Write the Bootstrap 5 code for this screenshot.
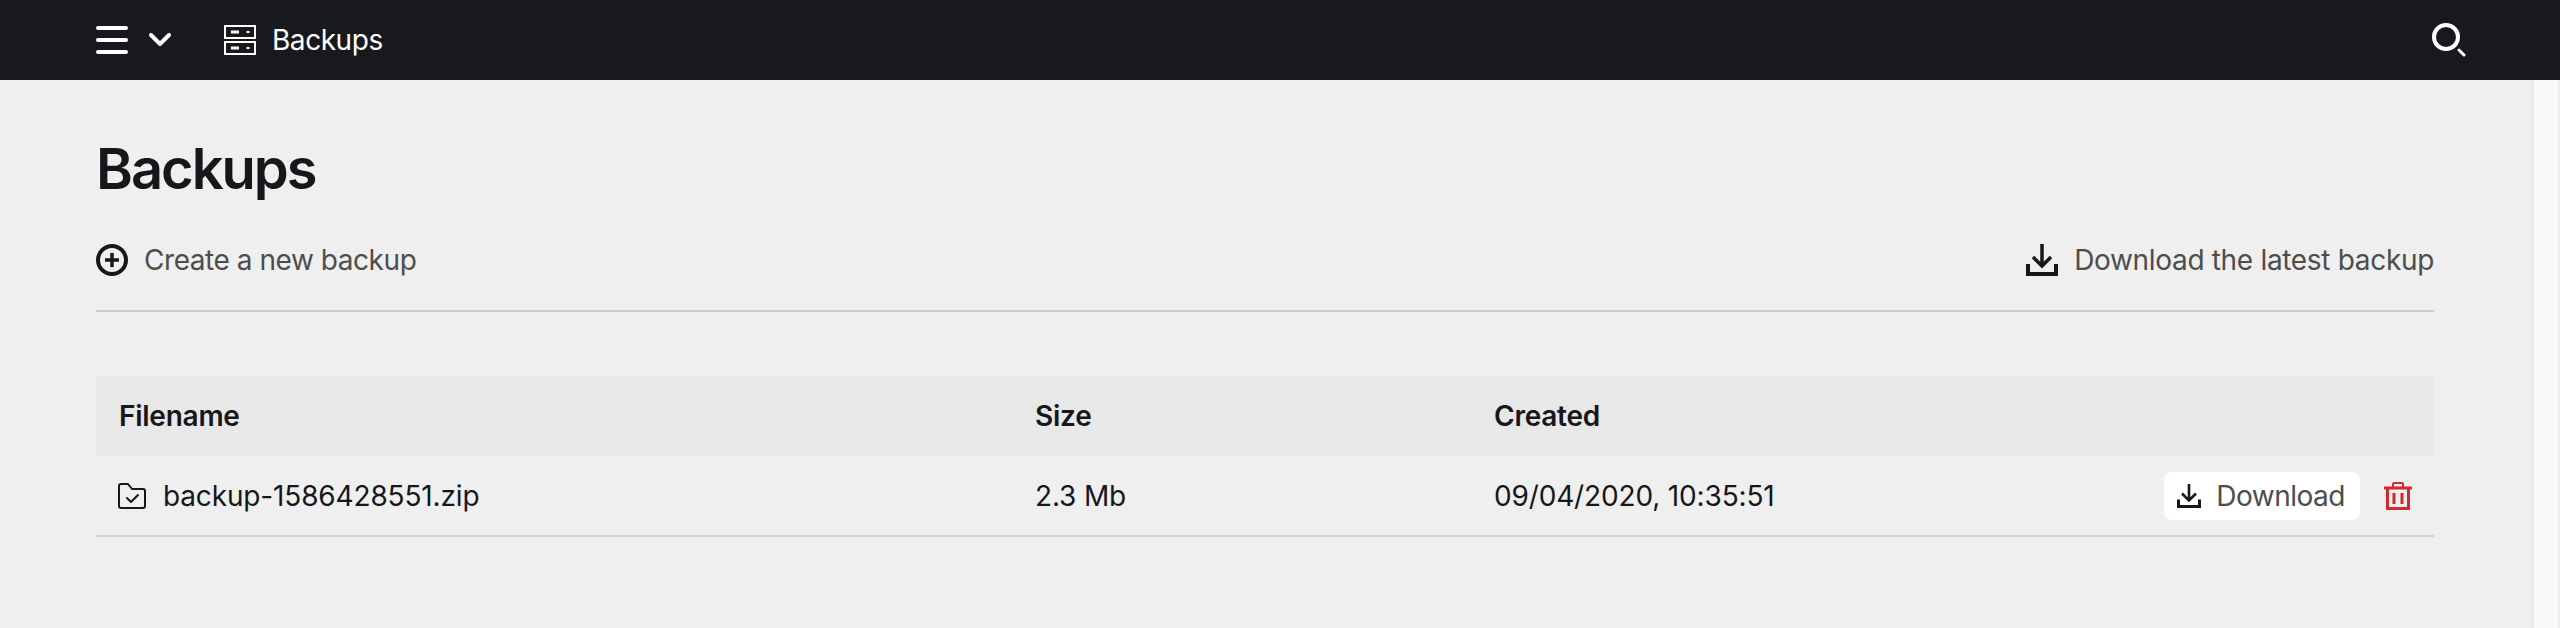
<!DOCTYPE html>
<html lang="en">
<head>
  <meta charset="UTF-8">
  <title>Backups</title>
  <link href="https://cdn.jsdelivr.net/npm/bootstrap@5.3.3/dist/css/bootstrap.min.css" rel="stylesheet">
  <style>
    html, body { height: 100%; overflow: hidden; }
    body { font-family: Inter, "Liberation Sans", sans-serif; background: #efefef; color: #16171b; font-size: 28px; }
    .topbar { height: 80px; background: #18191d; padding: 0 94px 0 96px; color: #fff; }
    .topbar-title { font-size: 28px; line-height: 1; font-weight: 400; letter-spacing: -.45px; margin-left: 16px; }
    .nav-chevron { margin-left: 21px; }
    .nav-server { margin-left: 53px; }
    .page-wrap { height: 548px; }
    .main-pane { padding: 0 98px 0 96px; min-width: 0; }
    .scroll-strip { width: 28px; background: #fafafa; border-left: 2px solid #e8e8e8; border-right: 2px solid #f0f0f0; }
    .page-title { font-size: 56px; font-weight: 600; line-height: 68px; margin: 55px 0 0; letter-spacing: -2px; }
    .action-row { margin-top: 31px; height: 78px; border-bottom: 2px solid #cccccc; padding-bottom: 24px; }
    .action-link { color: #4d4d4d; text-decoration: none; font-size: 28px; line-height: 32px; letter-spacing: -.45px; }
    .action-link-end { letter-spacing: -.32px; }
    .backup-table { margin: 64px 0 0; table-layout: fixed; width: 100%; --bs-table-bg: transparent; color: #16171b; letter-spacing: -.15px; }
    .backup-table col.col-name { width: 917px; }
    .backup-table col.col-size { width: 459px; }
    .backup-table th { background: #e8e8e8; height: 80px; padding: 0 22px; font-weight: 600; border: 0; vertical-align: middle; letter-spacing: -.25px; }
    .backup-table th:first-child { padding-left: 23px; }
    .backup-table td { height: 80px; padding: 0 22px; border: 0; border-bottom: 2px solid #d4d4d4; vertical-align: middle; background: transparent; }
    .file-name { margin-left: 17px; }
    .btn-dl { background: #fff; border: 0; border-radius: 8px; height: 48px; padding: 0 15px 0 13px; color: #4d4d4d; font-size: 28px; line-height: 1; letter-spacing: -.5px; gap: 15px; }
    .btn-dl:hover { background: #fff; color: #4d4d4d; }
    .btn-trash { background: none; border: 0; padding: 0; line-height: 0; }
  </style>
</head>
<body>
  <nav class="navbar topbar d-flex align-items-center justify-content-between flex-nowrap">
    <div class="d-flex align-items-center">
      <svg width="32" height="32" viewBox="0 0 32 32" fill="none" stroke="#fff" stroke-width="4" stroke-linecap="round"><path d="M2 4h28M2 16h28M2 28h28"/></svg>
      <svg class="nav-chevron" width="22" height="14" viewBox="0 0 22 14" fill="none" stroke="#fff" stroke-width="4" stroke-linecap="round" stroke-linejoin="round"><path d="M2 2l9 9 9-9"/></svg>
      <svg class="nav-server" width="32" height="30" viewBox="0 0 32 30" fill="none" stroke="#fff">
        <rect x="1" y="1" width="30" height="12" stroke-width="2"/><rect x="1" y="17" width="30" height="12" stroke-width="2"/>
        <path d="M7 7h8M7 23h8" stroke-width="3"/><path d="M24 6v2M24 22v2" stroke-width="3"/>
      </svg>
      <span class="topbar-title">Backups</span>
    </div>
    <svg width="34" height="34" viewBox="0 0 34 34" fill="none" stroke="#fff" stroke-linecap="round"><circle cx="14" cy="14" r="12" stroke-width="4"/><path d="M27 27l5 5" stroke-width="3"/></svg>
  </nav>

  <div class="page-wrap d-flex">
    <main class="main-pane flex-grow-1">
      <h1 class="page-title">Backups</h1>
      <div class="action-row d-flex justify-content-between align-items-center">
        <a class="action-link d-flex align-items-center gap-3" href="#">
          <svg width="32" height="32" viewBox="0 0 32 32" fill="none" stroke="#16171b"><circle cx="16" cy="16" r="14" stroke-width="4"/><path d="M16 9v14M9 16h14" stroke-width="3.5"/></svg>
          <span>Create a new backup</span>
        </a>
        <a class="action-link action-link-end d-flex align-items-center gap-3" href="#">
          <svg width="32" height="32" viewBox="0 0 32 32" fill="none" stroke="#16171b" stroke-width="3.5"><path d="M16 0v21M7 13l9 9 9-9"/><path d="M2 20v10h28V20" stroke-width="4"/></svg>
          <span>Download the latest backup</span>
        </a>
      </div>

      <table class="table backup-table">
        <colgroup><col class="col-name"><col class="col-size"><col><col></colgroup>
        <thead>
          <tr><th>Filename</th><th>Size</th><th>Created</th><th></th></tr>
        </thead>
        <tbody>
          <tr>
            <td>
              <div class="d-flex align-items-center">
                <svg width="28" height="26" viewBox="0 0 28 26" fill="none" stroke="#16171b" stroke-width="2" stroke-linejoin="round" stroke-linecap="round"><path d="M1 3a2 2 0 012-2h7l4 5h11a2 2 0 012 2v15a2 2 0 01-2 2H3a2 2 0 01-2-2z"/><path d="M9 15l4 4 7-7"/></svg>
                <span class="file-name">backup-1586428551.zip</span>
              </div>
            </td>
            <td>2.3 Mb</td>
            <td>09/04/2020, 10:35:51</td>
            <td>
              <div class="d-flex align-items-center justify-content-end gap-4">
                <button class="btn btn-dl d-flex align-items-center" type="button">
                  <svg width="24" height="24" viewBox="0 0 24 24" fill="none" stroke="#16171b" stroke-width="2.6"><path d="M12 0v16M5 9.500l7 7 7-7"/><path d="M1.500 15.500v7h21v-7" stroke-width="3"/></svg>
                  <span>Download</span>
                </button>
                <button class="btn-trash" type="button" aria-label="Delete">
                  <svg width="28" height="28" viewBox="0 0 28 28" fill="none" stroke="#cf2a2f"><path d="M9 5V2a1 1 0 011-1h8a1 1 0 011 1v3" stroke-width="2"/><path d="M0 6h28" stroke-width="3"/><path d="M3.500 6v20.500h21V6" stroke-width="3"/><path d="M10 11v11M18 11v11" stroke-width="3"/></svg>
                </button>
              </div>
            </td>
          </tr>
        </tbody>
      </table>
    </main>
    <div class="scroll-strip flex-shrink-0"></div>
  </div>
</body>
</html>
